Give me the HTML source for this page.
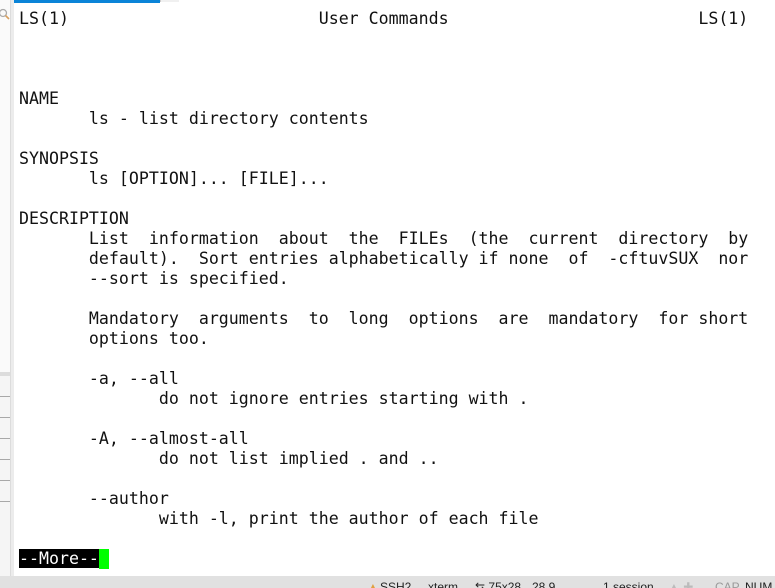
<!DOCTYPE html>
<html><head><meta charset="utf-8"><style>
html,body{margin:0;padding:0;}
body{width:775px;height:588px;overflow:hidden;background:#fff;position:relative;font-family:"DejaVu Sans Mono","Liberation Mono",monospace;}
.l{position:absolute;left:19px;height:20px;line-height:20px;font-size:16.6px;white-space:pre;color:#111;margin-top:1px;}
#side{position:absolute;left:0;top:0;width:10px;height:576px;background:#f5f5f5;}
#border{position:absolute;left:10px;top:0;width:4px;height:576px;background:#ececec;border-left:1px solid #dcdcdc;box-sizing:border-box;}
.hl{position:absolute;left:0;width:10px;height:1px;background:#a8a8a8;}
#blue{position:absolute;left:14px;top:0;width:146px;height:3px;background:#0a84d8;}
#status{position:absolute;left:0;top:576px;width:775px;height:12px;background:#e1e1e1;overflow:hidden;font-family:"Liberation Sans",sans-serif;font-size:12px;color:#222;}
#status span{position:absolute;top:4px;line-height:14px;white-space:nowrap;}
.more{background:#000;color:#fff;}
.cur{display:inline-block;width:10px;height:20px;background:#00ff00;vertical-align:top;}
</style></head><body>
<div id="side"></div>
<div style="position:absolute;left:0;top:0;width:10px;height:372px;background:#fafafa"></div>
<svg style="position:absolute;left:0;top:8px" width="10" height="14"><circle cx="3" cy="5" r="3.5" fill="none" stroke="#aaa" stroke-width="1.3"/><line x1="5.5" y1="7.5" x2="9" y2="11" stroke="#d8a060" stroke-width="1.6"/></svg>
<div style="position:absolute;left:0;top:372px;width:10px;height:4px;background:#dcdcdc"></div>
<div class="hl" style="top:396px"></div>
<div class="hl" style="top:417px"></div>
<div class="hl" style="top:438px"></div>
<div class="hl" style="top:459px"></div>
<div class="hl" style="top:480px"></div>
<div class="hl" style="top:501px"></div>
<div id="border"></div>
<div id="blue"></div>
<div style="position:absolute;left:160px;top:0;width:18px;height:2px;background:#f0f0f0;border-left:1px solid #ccc"></div>

<div class="l" style="top:8px">LS(1)                         User Commands                         LS(1)</div>
<div class="l" style="top:88px">NAME</div>
<div class="l" style="top:108px">       ls - list directory contents</div>
<div class="l" style="top:148px">SYNOPSIS</div>
<div class="l" style="top:168px">       ls [OPTION]... [FILE]...</div>
<div class="l" style="top:208px">DESCRIPTION</div>
<div class="l" style="top:228px">       List  information  about  the  FILEs  (the  current  directory  by</div>
<div class="l" style="top:248px">       default).  Sort entries alphabetically if none  of  -cftuvSUX  nor</div>
<div class="l" style="top:268px">       --sort is specified.</div>
<div class="l" style="top:308px">       Mandatory  arguments  to  long  options  are  mandatory  for short</div>
<div class="l" style="top:328px">       options too.</div>
<div class="l" style="top:368px">       -a, --all</div>
<div class="l" style="top:388px">              do not ignore entries starting with .</div>
<div class="l" style="top:428px">       -A, --almost-all</div>
<div class="l" style="top:448px">              do not list implied . and ..</div>
<div class="l" style="top:488px">       --author</div>
<div class="l" style="top:508px">              with -l, print the author of each file</div>
<div class="l" style="top:548px"><span class="more">--More--</span><span class="cur"></span></div>

<div id="status">
<span style="left:367px;color:#e0a040">&#9650;</span>
<span style="left:380px">SSH2</span>
<span style="left:428px">xterm</span>
<span style="left:475px">&#8646; 75x28</span>
<span style="left:532px">28,9</span>
<span style="left:603px">1 session</span>
<span style="left:668px;color:#bbb">&#9650; &#10010;</span>
<span style="left:715px;color:#999">CAP</span>
<span style="left:745px">NUM</span>
</div>
</body></html>
